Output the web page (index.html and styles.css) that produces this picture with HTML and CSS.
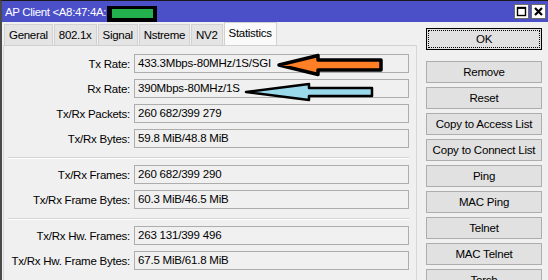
FILE: index.html
```html
<!DOCTYPE html>
<html>
<head>
<meta charset="utf-8">
<link rel="stylesheet" href="styles.css">
</head>
<body>
<div class="window">
  <div class="titlebar">
    <span class="title">AP Client &lt;A8:47:4A:</span>
    <span class="mask"><span class="mask-fill"></span></span>
    <span class="spacer"></span>
    <span class="tbtn"><svg width="13" height="13" viewBox="0 0 13 13"><rect x="2.5" y="2.5" width="8" height="8" fill="none" stroke="#000" stroke-width="1.4"/><line x1="2.5" y1="3.2" x2="10.5" y2="3.2" stroke="#000" stroke-width="1.4"/></svg></span>
    <span class="tbtn"><svg width="13" height="13" viewBox="0 0 13 13"><path d="M3 3 L10 10 M10 3 L3 10" stroke="#000" stroke-width="2.2"/></svg></span>
  </div>
  <div class="content">
    <div class="main">
      <div class="tabs">
        <div class="tab">General</div>
        <div class="tab">802.1x</div>
        <div class="tab">Signal</div>
        <div class="tab">Nstreme</div>
        <div class="tab">NV2</div>
        <div class="tab active">Statistics</div>
      </div>
      <div class="panel">
        <div class="group">
          <div class="row"><span class="label">Tx Rate:</span><span class="field">433.3Mbps-80MHz/1S/SGI</span></div>
          <div class="row"><span class="label">Rx Rate:</span><span class="field">390Mbps-80MHz/1S</span></div>
          <div class="row"><span class="label">Tx/Rx Packets:</span><span class="field">260 682/399 279</span></div>
          <div class="row"><span class="label">Tx/Rx Bytes:</span><span class="field">59.8 MiB/48.8 MiB</span></div>
        </div>
        <div class="sep"></div>
        <div class="group">
          <div class="row"><span class="label">Tx/Rx Frames:</span><span class="field">260 682/399 290</span></div>
          <div class="row"><span class="label">Tx/Rx Frame Bytes:</span><span class="field">60.3 MiB/46.5 MiB</span></div>
        </div>
        <div class="sep"></div>
        <div class="group">
          <div class="row"><span class="label">Tx/Rx Hw. Frames:</span><span class="field">263 131/399 496</span></div>
          <div class="row"><span class="label">Tx/Rx Hw. Frame Bytes:</span><span class="field">67.5 MiB/61.8 MiB</span></div>
        </div>
      </div>
    </div>
    <div class="buttons">
      <button class="btn ok">OK</button>
      <div class="btn-list">
        <button class="btn">Remove</button>
        <button class="btn">Reset</button>
        <button class="btn">Copy to Access List</button>
        <button class="btn">Copy to Connect List</button>
        <button class="btn">Ping</button>
        <button class="btn">MAC Ping</button>
        <button class="btn">Telnet</button>
        <button class="btn">MAC Telnet</button>
        <button class="btn">Torch</button>
      </div>
    </div>
  </div>
  <svg class="arrows" width="548" height="280" viewBox="0 0 548 280">
    <path d="M279 65 L318 55.5 L318 60 L381 60 L381 70 L318 70 L318 74.5 Z" fill="#ff7f27" stroke="#000" stroke-width="3.5" stroke-linejoin="round"/>
    <path d="M246 92 L309 84 L309 88 L372 88 L372 96 L309 96 L309 100 Z" fill="#99d9ea" stroke="#000" stroke-width="2.5" stroke-linejoin="round"/>
  </svg>
</div>
</body>
</html>
```
FILE: styles.css
```css
html, body {
  margin: 0;
  padding: 0;
}
body {
  width: 548px;
  height: 280px;
  overflow: hidden;
  background: #f0f0f0;
  font-family: "Liberation Sans", Arial, sans-serif;
  font-size: 11px;
  color: #000;
}
.window {
  position: relative;
  width: 548px;
  height: 280px;
  box-sizing: border-box;
  border-left: 2px solid #4a4a4a;
  border-top: 1px solid #1a1a1a;
  background: #f0f0f0;
  overflow: hidden;
}
.titlebar {
  height: 21px;
  background: #4b50c9;
  color: #fff;
  display: flex;
  align-items: center;
  padding-left: 3px;
  padding-right: 2px;
  font-size: 11.5px;
}
.title {
  letter-spacing: -0.35px;
}
.mask {
  display: inline-flex;
  align-items: center;
  justify-content: center;
  width: 50px;
  height: 16px;
  background: #000;
  margin-left: 1px;
  margin-top: 4px;
}
.mask-fill {
  width: 41px;
  height: 9px;
  background: #22b14c;
}
.spacer {
  flex: 1;
}
.tbtn {
  width: 13px;
  height: 13px;
  background: #fff;
  border: 1px solid #6b6b6b;
  margin-left: 2px;
  display: flex;
}
.content {
  display: flex;
}
.main {
  width: 414px;
  padding-left: 1px;
  padding-top: 1px;
}
.tabs {
  display: flex;
  height: 22px;
  padding-left: 1px;
  align-items: flex-end;
}
.tab {
  height: 20px;
  line-height: 20px;
  padding: 0 4px;
  background: #e4e4e4;
  border: 1px solid #d2d2d2;
  border-bottom: none;
  margin-right: 1px;
  font-size: 11.5px;
  letter-spacing: -0.3px;
}
.tab.active {
  height: 22px;
  line-height: 20px;
  background: #fafafa;
  padding: 0 4px;
}
.panel {
  height: 240px;
  border: 1px solid #d7d7d7;
  border-top-color: #d0d0d0;
  padding: 8px 7px 0 0;
}
.group {
  display: flex;
  flex-direction: column;
  gap: 6px;
}
.row {
  display: flex;
  align-items: center;
  height: 19px;
}
.label {
  width: 126px;
  text-align: right;
  padding-right: 4px;
  font-size: 11.5px;
  letter-spacing: -0.25px;
  white-space: nowrap;
}
.field {
  flex: 1;
  height: 17px;
  line-height: 17px;
  border: 1px solid #adadad;
  background: #f0f0f0;
  padding-left: 3px;
  font-size: 11.5px;
  letter-spacing: -0.2px;
  white-space: nowrap;
}
.sep {
  margin: 9px 0 6px 4px;
  height: 0;
  border-top: 1px solid #d5d5d5;
  border-bottom: 1px solid #ffffff;
}
.buttons {
  margin-left: 9px;
  width: 116px;
  padding-top: 6px;
}
.btn {
  display: block;
  width: 116px;
  height: 22px;
  padding: 0;
  background: #e1e1e1;
  border: 1px solid #adadad;
  font-family: "Liberation Sans", Arial, sans-serif;
  font-size: 11.5px;
  letter-spacing: -0.2px;
  color: #000;
  text-align: center;
}
.btn.ok {
  border: 1px solid #000;
  outline: 1px dotted #000;
  outline-offset: -3px;
}
.btn-list {
  margin-top: 11px;
  display: flex;
  flex-direction: column;
  gap: 4px;
}
.arrows {
  position: absolute;
  left: -2px;
  top: -1px;
  pointer-events: none;
}
```
